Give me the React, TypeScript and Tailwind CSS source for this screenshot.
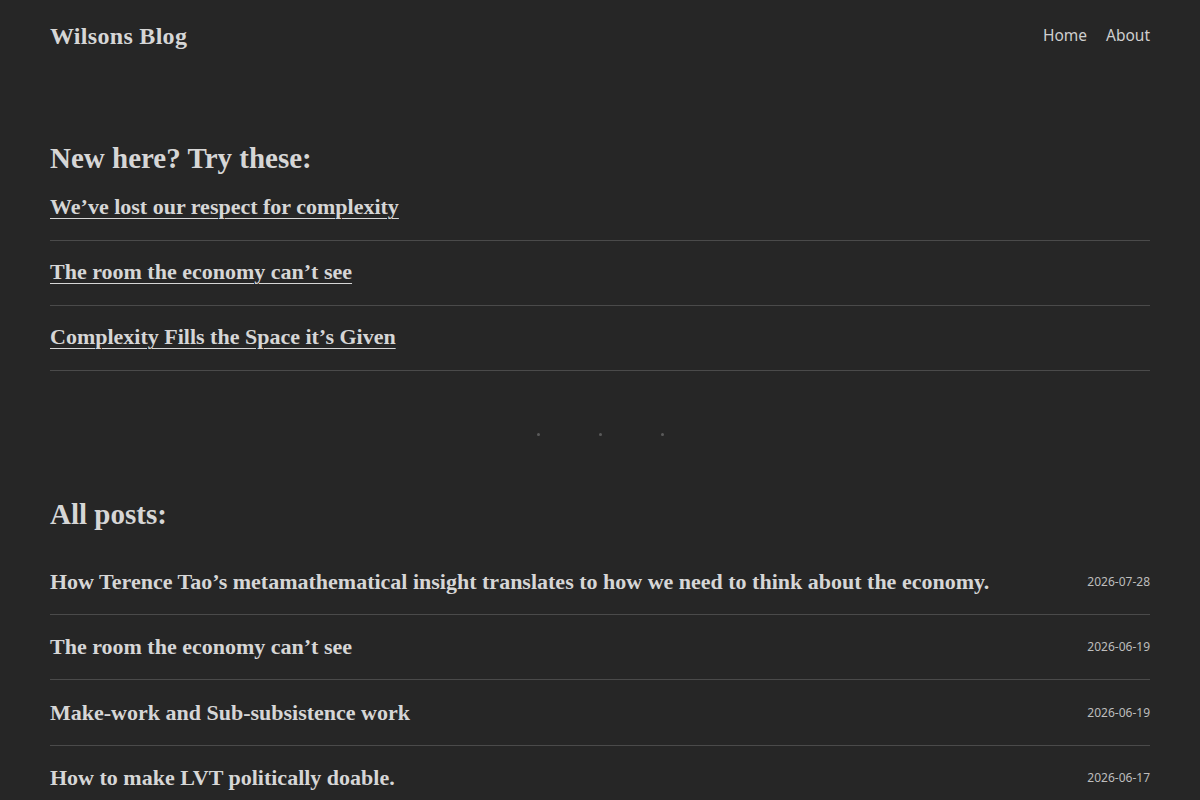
const featured = [
  "We’ve lost our respect for complexity",
  "The room the economy can’t see",
  "Complexity Fills the Space it’s Given",
];

const posts = [
  {
    title:
      "How Terence Tao’s metamathematical insight translates to how we need to think about the economy.",
    date: "2026-07-28",
  },
  { title: "The room the economy can’t see", date: "2026-06-19" },
  { title: "Make-work and Sub-subsistence work", date: "2026-06-19" },
  { title: "How to make LVT politically doable.", date: "2026-06-17" },
  { title: "Complexity Fills the Space it’s Given", date: "2026-06-10" },
];

const serif = "font-['Liberation_Serif','DejaVu_Serif',serif]";

export default function App() {
  return (
    <div className="min-h-screen bg-[#262626] text-[#d6d6d6] font-['Noto_Sans',sans-serif]">
      <div className="px-[50px]">
        <header className="flex items-center justify-between h-[70px]">
          <a href="#" className={`${serif} text-[24px] font-bold tracking-[0.3px] mt-[1px]`}>
            Wilsons Blog
          </a>
          <nav className="flex gap-[19px] text-[15.5px] text-[#cfcfcf] mt-[2px]">
            <a href="#">Home</a>
            <a href="#">About</a>
          </nav>
        </header>

        <section className="mt-[74px]">
          <h2 className={`${serif} text-[29px] font-bold leading-none`}>New here? Try these:</h2>
          <ul className="mt-[3px]">
            {featured.map((t) => (
              <li key={t} className="border-b border-[#4a4a4a] h-[65px] flex items-center">
                <a href="#" className={`${serif} text-[22px] font-bold underline underline-offset-[4px] decoration-1 mb-[3px]`}>
                  {t}
                </a>
              </li>
            ))}
          </ul>
        </section>

        {/* section separator */}
        <div className="flex justify-center gap-[59px] h-[3px] mt-[62px]">
          <span className="w-[3px] h-[3px] rounded-full bg-[#5a5a5a]" />
          <span className="w-[3px] h-[3px] rounded-full bg-[#5a5a5a]" />
          <span className="w-[3px] h-[3px] rounded-full bg-[#5a5a5a]" />
        </div>

        <section className="mt-[64px]">
          <h2 className={`${serif} text-[29px] font-bold leading-none`}>All posts:</h2>
          <ul className="mt-[20px]">
            {posts.map((p) => (
              <li key={p.title} className="border-b border-[#4a4a4a] h-[65.5px] flex items-center justify-between">
                <a href="#" className={`${serif} text-[22px] font-bold`}>
                  {p.title}
                </a>
                <span className="text-[12px] text-[#bdbdbd] mt-[1px]">{p.date}</span>
              </li>
            ))}
          </ul>
        </section>
      </div>
    </div>
  );
}
